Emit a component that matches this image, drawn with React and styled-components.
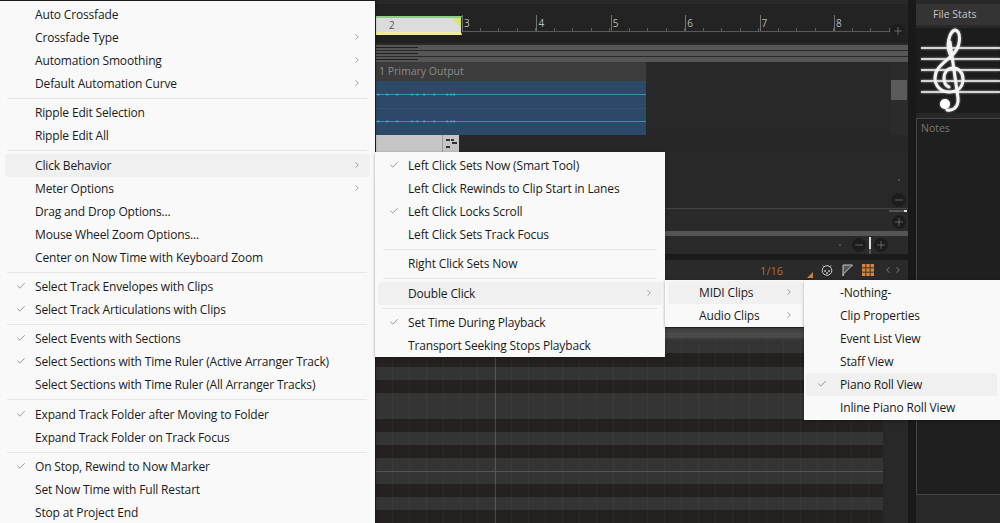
import React from 'react'
import styled, { createGlobalStyle } from 'styled-components'
import { Check, ChevronRight, Plus, Minus, ChevronLeft } from 'lucide-react'

const Global = createGlobalStyle`
  html, body { margin: 0; padding: 0; background: #1a1a1a; overflow: hidden; }
  * { box-sizing: border-box; }
`;

const Screen = styled.div`
  position: relative;
  width: 1000px;
  height: 523px;
  overflow: hidden;
  display: grid;
  grid-template-columns: 376px 532px 8px 84px;
  font-family: "Open Sans", "Liberation Sans", sans-serif;
  background: #1a1a1a;
`;

const Covered = styled.div`
  background: #1e1e1e;
`;

const Editor = styled.div`
  display: flex;
  flex-direction: column;
  height: 523px;
  background: #282828;
`;

const Gutter = styled.div`
  background: #191919;
`;

/* time ruler */
const Ruler = styled.div`
  display: flex;
  height: 32px;
  margin-top: 3px;
  background: #232323;
  border-top: 1px solid #2b2b2b;
`;

const Bars = styled.div`
  display: flex;
  align-items: stretch;
  width: 514px;
  overflow: hidden;
`;

const Bar = styled.div`
  flex: none;
  width: ${p => p.$w}px;
  margin-bottom: 3px;
  padding: 13px 0 0 ${p => p.$pad}px;
  border-bottom: 1px solid #5a5a5a;
  font-size: 10px;
  line-height: 12px;
  color: #b8b8b8;
  background-image:
    linear-gradient(#707070, #707070),
    repeating-linear-gradient(90deg, transparent 0 17.6px, #5c5c5c 17.6px 18.6px);
  background-size: 1px 16px, 100% 3px;
  background-position: left bottom, left bottom;
  background-repeat: no-repeat;
`;

const LoopBar = styled(Bar)`
  position: relative;
  color: #555;
  background: #dcdcdc;
  border-top: 2px solid #8fcb8b;
  border-bottom: 3px solid #f1ee96;
  margin: 12px 0 0;
  padding-top: 1px;
  border-right: 1px solid #2a2a10;
  &::after {
    content: "";
    position: absolute;
    top: 0;
    right: 0;
    width: 9px;
    height: 10px;
    background: #dbe56f;
    clip-path: polygon(0 0, 100% 0, 100% 100%);
  }
`;

const RoundBtn = styled.span`
  display: inline-flex;
  align-items: center;
  justify-content: center;
  flex: none;
  width: 14px;
  height: 14px;
  border-radius: 50%;
  background: #1d1d1d;
  color: #a8a8a8;
`;

const RulerEnd = styled.div`
  flex: 1;
  display: flex;
  justify-content: flex-end;
  align-items: flex-end;
  padding: 0 3px 0 0;
  margin-bottom: -3px;
`;

const Band = styled.div`
  height: 8px;
  background: #202020;
`;

const Lanes = styled.div`
  display: flex;
  flex-direction: column;
  gap: 1px;
  height: 19px;
  padding-top: 2px;
  background: #2a2a2a;
`;

const Lane = styled.div`
  flex: 1;
  background-color: #565656;
  background-image: linear-gradient(#1f1f1f, #1f1f1f);
  background-size: 42px 1px;
  background-position: 0 50%;
  background-repeat: no-repeat;
`;

/* track with audio clip */
const TrackRow = styled.div`
  display: flex;
  height: 73px;
`;

const Track = styled.div`
  width: 270px;
  display: flex;
  flex-direction: column;
`;

const TrackName = styled.div`
  height: 19px;
  padding-left: 3px;
  background: #3c3c3c;
  color: #8a8a8a;
  font-size: 10.5px;
  line-height: 19px;
`;

const Clip = styled.div`
  flex: 1;
  display: flex;
  flex-direction: column;
  background: #2c4a68;
`;

const Channel = styled.div`
  flex: 1;
  display: flex;
  align-items: center;
  & + & { border-top: 1px solid #34526f; }
`;

const TrackRest = styled.div`
  flex: 1;
  background: #282828;
`;

const ScrollTrack = styled.div`
  width: 17px;
  padding-top: 18px;
  background: #2b2b2b;
`;

const ScrollThumb = styled.div`
  width: 16px;
  height: 20px;
  background: #5a5a5a;
`;

const TabRow = styled.div`
  display: flex;
  height: 17px;
  background: #272727;
`;

const Tab = styled.div`
  width: 66px;
  background: #c6c6c6;
`;

const TabIcon = styled.div`
  width: 17px;
  display: flex;
  align-items: center;
  justify-content: center;
  background: #c4c4c4;
  border-left: 1px solid #9c9c9c;
`;

/* clips pane under the tab */
const Pane = styled.div`
  height: 57px;
  display: flex;
  flex-direction: column;
  justify-content: flex-end;
  align-items: flex-end;
  padding: 0 2px 1px 0;
  background: #282828;
  border-bottom: 1px solid #454545;
`;

const PaneDot = styled.i`
  width: 2px;
  height: 2px;
  margin: 0 6px 12px 0;
  background: #4c4c4c;
`;

const Pane2 = styled.div`
  height: 22px;
  display: flex;
  flex-direction: column;
  align-items: flex-end;
  gap: 3px;
  padding: 1px 2px 0 0;
  background: #2a2a2a;
`;

const Grip = styled.i`
  width: 18px;
  height: 2px;
  margin-right: -1px;
  background: linear-gradient(90deg, #555 0 15px, #e0e0e0 15px);
`;

const Stripe = styled.div`
  height: 5px;
  background: #555;
`;

const ZoomBar = styled.div`
  height: 18px;
  display: flex;
  align-items: center;
  justify-content: flex-end;
  gap: 3px;
  padding-right: 20px;
  background: #2a2a2a;
`;

const Dot = styled.i`
  width: 2px;
  height: 2px;
  margin-right: 8px;
  background: #555;
`;

const Handle = styled.i`
  width: 2px;
  height: 17px;
  background: linear-gradient(#ddd 0 12px, #555 12px);
`;

const Divider = styled.div`
  height: 6px;
  background: #1b1b1b;
`;

/* piano roll toolbar */
const Toolbar = styled.div`
  height: 20px;
  display: flex;
  align-items: center;
  justify-content: flex-end;
  padding-right: 5px;
  background: #2a2a2a;
`;

const Snap = styled.span`
  margin-right: 24px;
  color: #b56d30;
  font-size: 11px;
`;

const Tool = styled.span`
  display: inline-flex;
  justify-content: center;
  align-self: ${p => (p.$low ? 'flex-end' : 'center')};
  margin-bottom: ${p => (p.$low ? 2 : 0)}px;
  margin-left: ${p => p.$gap || 0}px;
  color: #cfcfcf;
`;

const RollTop = styled.div`
  height: 48px;
  background: #2a2a2a;
`;

const RollHead = styled.div`
  height: 12px;
  background: linear-gradient(#444 0 5px, #4a4a4a 5px 10px, #3a3a3a 10px);
`;

const Roll = styled.div`
  flex: 1;
  padding-right: 25px;
  background: #282828;
`;

const KeyRow = styled.div`
  height: ${p => p.$h}px;
  background: ${p => (p.$black ? '#252120' : '#343434')};
  background-image:
    linear-gradient(90deg, rgba(255,255,255,.16) 0 1px, transparent 1px),
    repeating-linear-gradient(90deg, transparent 0 16px, rgba(255,255,255,.03) 16px 17px);
  background-size: 1px 100%, 100% 100%;
  background-position: 119px 0, 0 0;
  background-repeat: no-repeat;
  ${p => p.$line && 'border-top: 1px solid #555;'}
`;

/* right side panel */
const Side = styled.div`
  display: flex;
  flex-direction: column;
  background: #282828;
`;

const StatsBtn = styled.div`
  height: 21px;
  margin-top: 4px;
  background: #343434;
  color: #c4c4c4;
  font-size: 10.5px;
  line-height: 21px;
  padding-left: 17px;
`;

const ClefBox = styled.div`
  height: 85px;
  margin-top: 3px;
  background: #1c1c1c;
`;

const ClefArt = styled.svg`
  display: block;
  filter: drop-shadow(0 0 1px rgba(255,255,255,.6));
`;

const NotesBox = styled.div`
  height: 377px;
  margin-top: 5px;
  padding: 2px 4px;
  background: #1f1f1f;
  border: 1px solid #454545;
  border-right: 0;
  color: #787878;
  font-size: 10.5px;
`;

const SideFoot = styled.div`
  height: 25px;
  background: #282828;
`;

/* context menus, on top of the app */
const Menu = styled.div`
  position: absolute;
  top: ${p => p.$top}px;
  left: ${p => p.$left}px;
  width: ${p => p.$w}px;
  height: ${p => p.$h}px;
  padding-top: ${p => p.$pad}px;
  background: #f9f9f9;
  box-shadow: 0 1px 3px rgba(0,0,0,.35);
  color: #1b1b1b;
  font-size: 12px;
  letter-spacing: -0.16px;
`;

const Item = styled.div`
  position: relative;
  display: flex;
  align-items: center;
  height: 23px;
  margin: 0 ${p => p.$mr}px 0 ${p => p.$ml}px;
  padding-left: ${p => p.$text}px;
  border-radius: 3px;
  background: ${p => (p.$on ? '#f0f0f0' : 'transparent')};
  white-space: nowrap;
`;

const Tick = styled.span`
  position: absolute;
  left: ${p => p.$x}px;
  top: 6px;
  display: flex;
  color: #333;
`;

const More = styled.span`
  position: absolute;
  right: 8px;
  top: 6px;
  display: flex;
  color: #444;
`;

const Sep = styled.div`
  height: 1px;
  margin: 3px 8px 2.33px;
  background: #e6e6e6;
`;

const rows = [
  { label: 'Auto Crossfade' },
  { label: 'Crossfade Type', more: true },
  { label: 'Automation Smoothing', more: true },
  { label: 'Default Automation Curve', more: true },
  { sep: true },
  { label: 'Ripple Edit Selection' },
  { label: 'Ripple Edit All' },
  { sep: true },
  { label: 'Click Behavior', more: true, on: true },
  { label: 'Meter Options', more: true },
  { label: 'Drag and Drop Options...' },
  { label: 'Mouse Wheel Zoom Options...' },
  { label: 'Center on Now Time with Keyboard Zoom' },
  { sep: true },
  { label: 'Select Track Envelopes with Clips', check: true },
  { label: 'Select Track Articulations with Clips', check: true },
  { sep: true },
  { label: 'Select Events with Sections', check: true },
  { label: 'Select Sections with Time Ruler (Active Arranger Track)', check: true },
  { label: 'Select Sections with Time Ruler (All Arranger Tracks)' },
  { sep: true },
  { label: 'Expand Track Folder after Moving to Folder', check: true },
  { label: 'Expand Track Folder on Track Focus' },
  { sep: true },
  { label: 'On Stop, Rewind to Now Marker', check: true },
  { label: 'Set Now Time with Full Restart' },
  { label: 'Stop at Project End' },
];

const clickRows = [
  { label: 'Left Click Sets Now (Smart Tool)', check: true },
  { label: 'Left Click Rewinds to Clip Start in Lanes' },
  { label: 'Left Click Locks Scroll', check: true },
  { label: 'Left Click Sets Track Focus' },
  { sep: true },
  { label: 'Right Click Sets Now' },
  { sep: true },
  { label: 'Double Click', more: true, on: true },
  { sep: true },
  { label: 'Set Time During Playback', check: true },
  { label: 'Transport Seeking Stops Playback' },
];

const clipRows = [
  { label: 'MIDI Clips', more: true, on: true },
  { label: 'Audio Clips', more: true },
];

const viewRows = [
  { label: '-Nothing-' },
  { label: 'Clip Properties' },
  { label: 'Event List View' },
  { label: 'Staff View' },
  { label: 'Piano Roll View', check: true, on: true },
  { label: 'Inline Piano Roll View' },
];

const MenuList = ({ items, ml, mr, text, tick }) =>
  items.map((r, i) =>
    r.sep ? (
      <Sep key={i} />
    ) : (
      <Item key={i} $on={r.on} $ml={ml} $mr={mr} $text={text}>
        {r.check && (
          <Tick $x={tick}>
            <Check size={10} strokeWidth={1.2} />
          </Tick>
        )}
        {r.label}
        {r.more && (
          <More>
            <ChevronRight size={10} strokeWidth={1.2} />
          </More>
        )}
      </Item>
    )
  );

const blips = [3, 12, 22, 37, 42, 49, 59, 72, 76, 79];

const Wave = () => (
  <svg width="270" height="5" viewBox="0 0 270 5">
    <path d="M0 2.5H270" stroke="#3a8fae" />
    {blips.map(x => (
      <path key={x} d={`M${x - 1.5} 1L${x + 1.5} 2.5L${x - 1.5} 4z`} fill="#3f9fc4" />
    ))}
  </svg>
);

const Clef = () => (
  <ClefArt width="84" height="85" viewBox="0 0 84 85" fill="none">
    <g stroke="#d4d4d4" strokeWidth="2.2">
      <path d="M5 20H84M5 31H84M5 42H84M5 53H84M5 64H84" />
    </g>
    <g stroke="#f4f4f4" strokeWidth="3" strokeLinecap="round">
      <path d="M34 26C30 18 33 4 39 2C45 3 45 16 39 24C32 33 19 38 19 50C19 59 26 64 33 64C42 64 47 59 47 51C47 44 42 40 37 40C31 40 28 45 28 50C28 55 30 58 33 59" />
      <path d="M34 14L42 70C43 80 36 83 31 82" />
    </g>
    <circle cx="29" cy="76" r="5" fill="#fff" />
  </ClefArt>
);

const keys = [
  { h: 13 }, { h: 14, black: true }, { h: 13 }, { h: 13, black: true },
  { h: 13 }, { h: 13 }, { h: 13, black: true }, { h: 13 }, { h: 13, black: true },
  { h: 13 }, { h: 13, line: true }, { h: 13, black: true }, { h: 13 }, { h: 13, black: true },
];

const barNumbers = [3, 4, 5, 6, 7, 8];

const App = () => (
  <Screen>
    <Global />
    <Covered />
    <Editor>
      <Ruler>
        <Bars>
          <LoopBar $w={86} $pad={13}>2</LoopBar>
          {barNumbers.map(n => (
            <Bar key={n} $w={74.4} $pad={2}>{n}</Bar>
          ))}
        </Bars>
        <RulerEnd>
          <RoundBtn><Plus size={12} strokeWidth={1} /></RoundBtn>
        </RulerEnd>
      </Ruler>
      <Band />
      <Lanes>
        <Lane />
        <Lane />
        <Lane />
      </Lanes>
      <TrackRow>
        <Track>
          <TrackName>1 Primary Output</TrackName>
          <Clip>
            <Channel><Wave /></Channel>
            <Channel><Wave /></Channel>
          </Clip>
        </Track>
        <TrackRest />
        <ScrollTrack><ScrollThumb /></ScrollTrack>
      </TrackRow>
      <TabRow>
        <Tab />
        <TabIcon>
          <svg width="11" height="10" viewBox="0 0 11 10" fill="#333">
            <rect x="0" y="0" width="4" height="2" />
            <rect x="5" y="0" width="3" height="2" />
            <rect x="6" y="3" width="5" height="2" />
            <rect x="0" y="7" width="4" height="2" />
          </svg>
        </TabIcon>
      </TabRow>
      <Pane>
        <PaneDot />
        <RoundBtn><Minus size={12} strokeWidth={1} /></RoundBtn>
      </Pane>
      <Pane2>
        <Grip />
        <RoundBtn><Plus size={12} strokeWidth={1} /></RoundBtn>
      </Pane2>
      <Stripe />
      <ZoomBar>
        <Dot />
        <RoundBtn><Minus size={12} strokeWidth={1} /></RoundBtn>
        <Handle />
        <RoundBtn><Plus size={12} strokeWidth={1} /></RoundBtn>
      </ZoomBar>
      <Divider />
      <Toolbar>
        <Snap>1/16</Snap>
        <Tool $low>
          <svg width="6" height="6" viewBox="0 0 6 6" fill="#c8803c"><path d="M6 0V6H0z" /></svg>
        </Tool>
        <Tool $gap={8}>
          <svg width="12" height="12" viewBox="0 0 12 12" fill="none" stroke="#d0d0d0" strokeWidth="1">
            <circle cx="6" cy="6.5" r="4.8" />
            <path d="M2 1.5L3.5 3M10 1.5L8.5 3" />
            <circle cx="4" cy="7" r=".5" fill="#d0d0d0" />
            <circle cx="8" cy="7" r=".5" fill="#d0d0d0" />
            <circle cx="6" cy="9" r=".5" fill="#d0d0d0" />
          </svg>
        </Tool>
        <Tool $gap={9}>
          <svg width="11" height="12" viewBox="0 0 11 12" fill="none">
            <path d="M1 12V1H10.5L1.5 10z" fill="#5a5a5a" stroke="#c4c4c4" strokeWidth="1" />
          </svg>
        </Tool>
        <Tool $gap={9}>
          <svg width="12" height="12" viewBox="0 0 12 12" fill="#d9853b">
            <rect x="0" y="0" width="3.4" height="3.4" /><rect x="4.3" y="0" width="3.4" height="3.4" /><rect x="8.6" y="0" width="3.4" height="3.4" />
            <rect x="0" y="4.3" width="3.4" height="3.4" /><rect x="4.3" y="4.3" width="3.4" height="3.4" /><rect x="8.6" y="4.3" width="3.4" height="3.4" />
            <rect x="0" y="8.6" width="3.4" height="3.4" /><rect x="4.3" y="8.6" width="3.4" height="3.4" /><rect x="8.6" y="8.6" width="3.4" height="3.4" />
          </svg>
        </Tool>
        <Tool $gap={9}>
          <ChevronLeft size={10} strokeWidth={1.2} />
          <ChevronRight size={10} strokeWidth={1.2} />
        </Tool>
      </Toolbar>
      <RollTop />
      <RollHead />
      <Roll>
        {keys.map((k, i) => (
          <KeyRow key={i} $h={k.h} $black={k.black} $line={k.line} />
        ))}
      </Roll>
    </Editor>
    <Gutter />
    <Side>
      <StatsBtn>File Stats</StatsBtn>
      <ClefBox><Clef /></ClefBox>
      <NotesBox>Notes</NotesBox>
      <SideFoot />
    </Side>

    <Menu $top={1} $left={-1} $w={376} $h={530} $pad={2}>
      <MenuList items={rows} ml={6} mr={5} text={30} tick={11} />
    </Menu>
    <Menu $top={152} $left={375} $w={290} $h={205} $pad={2}>
      <MenuList items={clickRows} ml={3} mr={3} text={30} tick={11} />
    </Menu>
    <Menu $top={280} $left={665} $w={139} $h={47} $pad={1}>
      <MenuList items={clipRows} ml={3} mr={2} text={31} tick={11} />
    </Menu>
    <Menu $top={280} $left={804} $w={196} $h={140} $pad={1}>
      <MenuList items={viewRows} ml={2} mr={3} text={34} tick={11} />
    </Menu>
  </Screen>
);

export default App
